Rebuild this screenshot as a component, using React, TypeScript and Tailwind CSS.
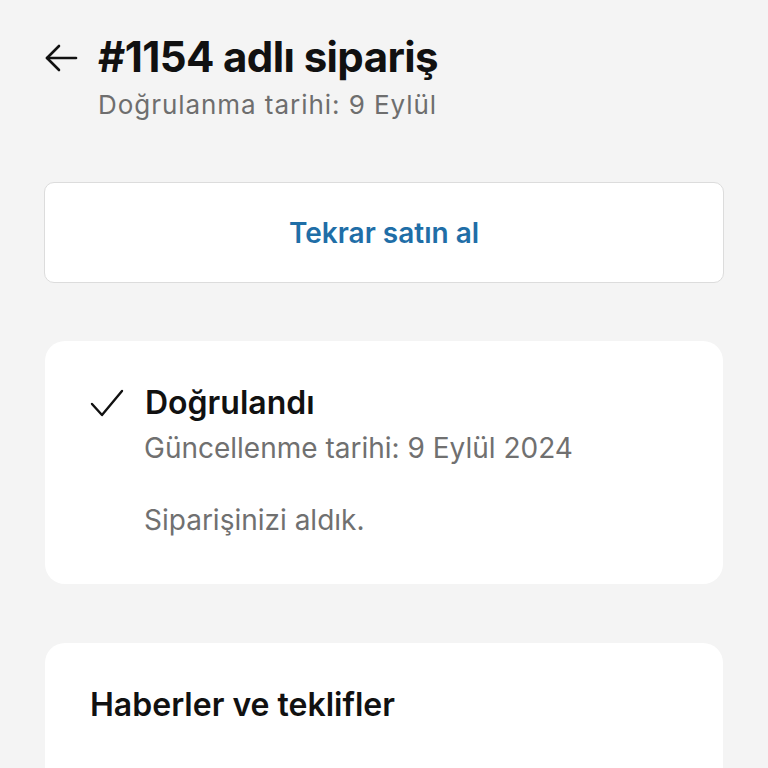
import React from 'react';

const BackArrow = () => (
  <svg width="34" height="28" viewBox="0 0 34 28" fill="none" stroke="#111" strokeWidth="2.6" strokeLinecap="round" strokeLinejoin="round">
    <path d="M32 14H3" />
    <path d="M15 2L3 14l12 12" />
  </svg>
);

const Check = () => (
  <svg width="34" height="28" viewBox="0 0 34 28" fill="none" stroke="#111" strokeWidth="2.4" strokeLinecap="round" strokeLinejoin="round">
    <path d="M2 15l10 11L32 2" />
  </svg>
);

export default function App() {
  return (
    <div className="h-[768px] w-[768px] overflow-hidden bg-[#f4f4f4] font-['Inter',sans-serif]">
      <div className="flex items-start gap-[20px] pl-[44px] pt-[32px]">
        <div className="pt-[12px]">
          <BackArrow />
        </div>
        <div className="flex flex-col">
          <div className="text-[42px] font-bold leading-[50px] tracking-[-0.6px] text-[#111]">#1154 adlı sipariş</div>
          <div className="mt-[6px] text-[26px] leading-[34px] tracking-[0.95px] text-[#6e6e6e]">Doğrulanma tarihi: 9 Eylül</div>
        </div>
      </div>

      <div className="mx-[44px] mt-[60px] flex h-[101px] items-center justify-center rounded-[10px] border border-[#dcdcdc] bg-white">
        <span className="text-[28px] font-semibold text-[#1f6ea7]">Tekrar satın al</span>
      </div>

      <div className="mx-[45px] mt-[58px] flex h-[243px] flex-col rounded-[20px] bg-white pl-[45px] pt-[40px]">
        <div className="flex items-center gap-[21px]">
          <Check />
          <span className="text-[32px] font-semibold leading-[44px] text-[#111]">Doğrulandı</span>
        </div>
        <div className="pl-[54px] pt-[4px] text-[28px] leading-[38px] text-[#707070]">Güncellenme tarihi: 9 Eylül 2024</div>
        <div className="pl-[54px] pt-[34px] text-[28px] leading-[38px] text-[#707070]">Siparişinizi aldık.</div>
      </div>

      <div className="mx-[45px] mt-[59px] h-[200px] rounded-[20px] bg-white pl-[45px] pt-[40px]">
        <div className="text-[32px] font-semibold leading-[44px] text-[#111]">Haberler ve teklifler</div>
      </div>
    </div>
  );
}
